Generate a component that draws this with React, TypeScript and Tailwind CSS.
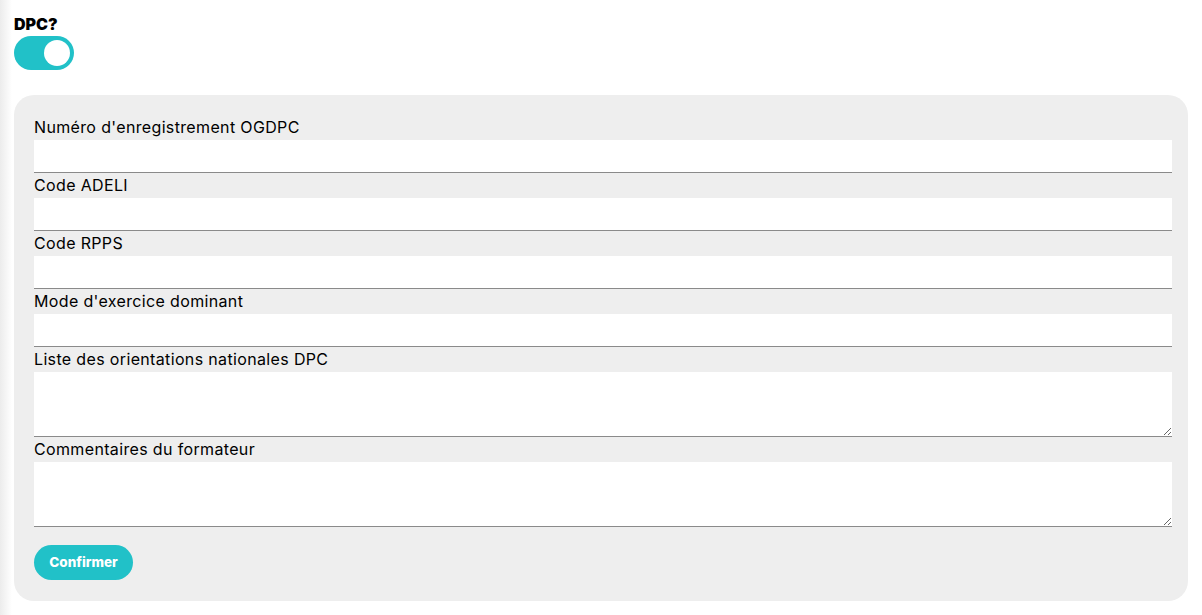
import React from "react";

function Field({ label, area }: { label: string; area?: boolean }) {
  return (
    <div className="flex flex-col">
      <label className="h-[25px] leading-[25px] text-[16px] tracking-[0.35px] text-black">{label}</label>
      {area ? (
        <textarea className="h-[65px] w-full bg-white border-b border-[#8a8a8a] resize-y outline-none block" />
      ) : (
        <input className="h-[33px] w-full bg-white border-b border-[#8a8a8a] outline-none block" />
      )}
    </div>
  );
}

export default function App() {
  return (
    <div
      className="w-[1202px] h-[615px] bg-white flex overflow-hidden"
      style={{ fontFamily: "Inter, 'Open Sans', sans-serif" }}
    >
      <div className="w-[12px] shrink-0 bg-gradient-to-r from-[#ececec] to-white" />
      <div className="flex-1 pl-[2px] pr-[14px] pt-[14px]">
        <div className="font-black text-[16px] leading-[20px] text-black">DPC?</div>
        <div className="mt-[2px] w-[60px] h-[34px] rounded-full bg-[#21c1c8] flex items-center justify-end pr-[4px]">
          <div className="w-[26px] h-[26px] rounded-full bg-white" />
        </div>
        <div className="mt-[25px] bg-[#eeeeee] rounded-[20px] pl-[20px] pr-[16px] pt-[20px] pb-[21px]">
          <Field label="Numéro d'enregistrement OGDPC" />
          <Field label="Code ADELI" />
          <Field label="Code RPPS" />
          <Field label="Mode d'exercice dominant" />
          <Field label="Liste des orientations nationales DPC" area />
          <Field label="Commentaires du formateur" area />
          <button className="mt-[18px] h-[35px] w-[99px] rounded-full bg-[#21c1c8] text-white text-[13.5px] font-extrabold">
            Confirmer
          </button>
        </div>
      </div>
    </div>
  );
}
